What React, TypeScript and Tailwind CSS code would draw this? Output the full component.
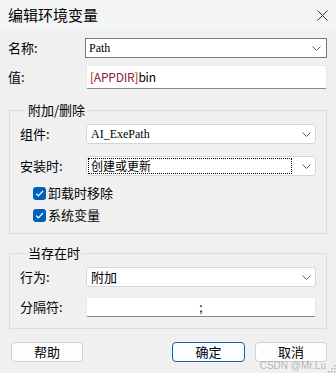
import React from "react";

const cjk = { fontFamily: '"Noto Sans CJK SC", "Noto Sans", sans-serif' };
const serif = { fontFamily: '"Liberation Serif", "DejaVu Serif", serif' };

function Chevron() {
  return (
    <svg width="9" height="5" viewBox="0 0 9 5" className="shrink-0">
      <path d="M0.5 0.5 L4.5 4.5 L8.5 0.5" fill="none" stroke="#606060" strokeWidth="1" />
    </svg>
  );
}

function Check() {
  return (
    <div className="w-[13px] h-[13px] rounded-[3px] bg-[#005fb8] flex items-center justify-center shrink-0">
      <svg width="9" height="7" viewBox="0 0 9 7">
        <path d="M1 3.6 L3.3 5.8 L8 1" fill="none" stroke="#ffffff" strokeWidth="1.2" />
      </svg>
    </div>
  );
}

function Combo({ children, focus }: { children: React.ReactNode; focus?: boolean }) {
  return (
    <div className="flex-1 h-[20px] bg-white border border-[#d6d6d6] rounded-[3px] flex items-center pl-[1px] pr-[4px]">
      <div
        className={
          "flex-1 h-[16px] flex items-center pl-[2px] mr-[10px] " +
          (focus ? "border border-dotted border-black" : "border border-transparent")
        }
      >
        {children}
      </div>
      <Chevron />
    </div>
  );
}

export default function App() {
  return (
    <div className="w-[336px] h-[373px] bg-[#f0f0f0] relative overflow-hidden text-black" style={cjk}>
      {/* title bar */}
      <div className="h-[30px] bg-[#f3f4f5] flex items-center justify-between pl-[8px] pr-[8px]">
        <span className="text-[15px] leading-[16px]">编辑环境变量</span>
        <svg width="11" height="11" viewBox="0 0 11 11">
          <path d="M0.5 0.5 L10.5 10.5 M10.5 0.5 L0.5 10.5" stroke="#333" strokeWidth="1" />
        </svg>
      </div>

      <div className="px-[9px]">
        {/* name */}
        <div className="flex items-center mt-[8px] h-[20px] -ml-[1px]">
          <span className="w-[77px] text-[13px] leading-[14px]">名称:</span>
          <div className="flex-1 h-[20px] bg-white border border-[#7a7a7a] flex items-center pl-[3px] pr-[5px]">
            <span className="flex-1 text-[12px] leading-[14px] text-black" style={serif}>Path</span>
            <Chevron />
          </div>
        </div>

        {/* value */}
        <div className="flex items-center mt-[7px] h-[24px] -ml-[1px]">
          <span className="w-[78px] text-[13px] leading-[14px]">值:</span>
          <div className="flex-1 h-[24px] bg-white border border-[#e8e8e8] border-b-[#8a8a8a] rounded-[2px] flex items-center pl-[3px]">
            <span className="text-[12px] leading-[14px] tracking-[-0.2px]">
              <span className="text-[#c00000]">[</span>
              <span className="text-[#8b1a3a]">APPDIR</span>
              <span className="text-[#c00000]">]</span>
              bin
            </span>
          </div>
        </div>

        {/* group 1 */}
        <fieldset className="mt-[14px] border border-[#dcdcdc] px-[10px] pt-[7px] pb-[8px]">
          <legend className="ml-[6px] px-[2px] text-[13px] leading-[14px]">附加/删除</legend>
          <div className="flex items-center h-[20px]">
            <span className="w-[66px] text-[13px] leading-[14px]">组件:</span>
            <Combo>
              <span className="text-[12px] leading-[14px]" style={serif}>AI_ExePath</span>
            </Combo>
          </div>
          <div className="flex items-center h-[20px] mt-[12px]">
            <span className="w-[66px] text-[13px] leading-[14px]">安装时:</span>
            <Combo focus>
              <span className="text-[12px] leading-[14px]">创建或更新</span>
            </Combo>
          </div>
          <div className="flex items-center h-[20px] mt-[7px] pl-[13px] gap-[2px]">
            <Check />
            <span className="text-[13px] leading-[14px]">卸载时移除</span>
          </div>
          <div className="flex items-center h-[20px] mt-[2px] pl-[13px] gap-[2px]">
            <Check />
            <span className="text-[13px] leading-[14px]">系统变量</span>
          </div>
        </fieldset>

        {/* group 2 */}
        <fieldset className="mt-[12px] border border-[#dcdcdc] px-[10px] pt-[7px] pb-[11px]">
          <legend className="ml-[6px] px-[2px] text-[13px] leading-[14px]">当存在时</legend>
          <div className="flex items-center h-[20px]">
            <span className="w-[66px] text-[13px] leading-[14px]">行为:</span>
            <Combo>
              <span className="text-[13px] leading-[14px]">附加</span>
            </Combo>
          </div>
          <div className="flex items-center h-[20px] mt-[10px]">
            <span className="w-[66px] text-[13px] leading-[14px]">分隔符:</span>
            <div className="flex-1 h-[20px] bg-white border border-[#e8e8e8] border-b-[#8a8a8a] rounded-[2px] flex items-center justify-center">
              <span className="text-[12px] leading-[14px]">;</span>
            </div>
          </div>
        </fieldset>

        {/* buttons */}
        <div className="flex items-center mt-[13px] pl-[2px]">
          <button className="w-[72px] h-[20px] bg-[#fdfdfd] border border-[#d0d0d0] rounded-[4px] text-[13px] leading-[14px] flex items-center justify-center">
            帮助
          </button>
          <div className="flex-1" />
          <button className="w-[73px] h-[20px] bg-[#fdfdfd] border border-[#0067c0] rounded-[4px] text-[13px] leading-[14px] flex items-center justify-center">
            确定
          </button>
          <button className="ml-[10px] w-[72px] h-[20px] bg-[#fdfdfd] border border-[#d0d0d0] rounded-[4px] text-[13px] leading-[14px] flex items-center justify-center">
            取消
          </button>
        </div>
      </div>

      {/* watermark */}
      <div className="absolute right-[10px] bottom-[2px] text-[10px] leading-[10px] text-[#9a9a9a]/70" style={{ fontFamily: '"Liberation Sans", sans-serif' }}>
        CSDN @Mr.Lu
      </div>
      {/* resize grip */}
      <svg className="absolute right-0 bottom-0" width="8" height="8" viewBox="0 0 8 8">
        <rect x="6" y="0" width="1.5" height="1.5" fill="#b0b0b0" />
        <rect x="3" y="3" width="1.5" height="1.5" fill="#b0b0b0" />
        <rect x="6" y="3" width="1.5" height="1.5" fill="#b0b0b0" />
        <rect x="0" y="6" width="1.5" height="1.5" fill="#b0b0b0" />
        <rect x="3" y="6" width="1.5" height="1.5" fill="#b0b0b0" />
        <rect x="6" y="6" width="1.5" height="1.5" fill="#b0b0b0" />
      </svg>
    </div>
  );
}
